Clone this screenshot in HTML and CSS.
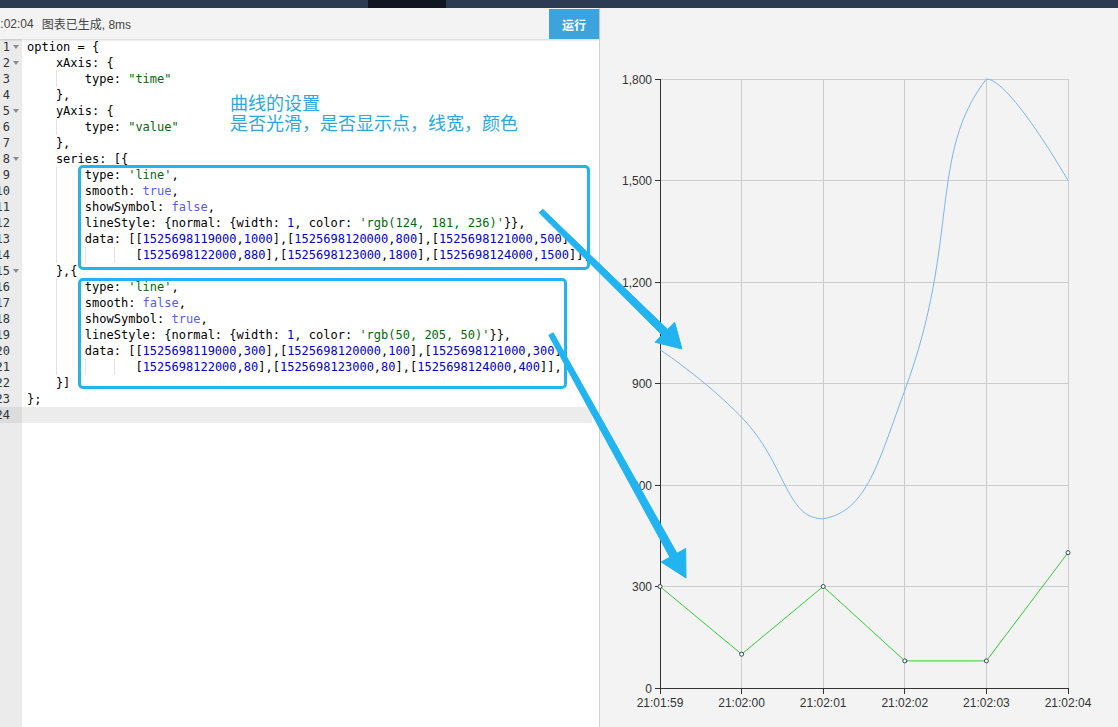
FILE: index.html
```html
<!DOCTYPE html>
<html lang="zh">
<head>
<meta charset="utf-8">
<title>ECharts 示例</title>
<link rel="stylesheet" href="styles.css">
</head>
<body>
<div class="topbar"><div class="topbar-tab"></div></div>
<div class="main">
  <section class="left">
    <div class="toolbar">
      <span class="time">21:02:04</span><span class="msg">图表已生成, 8ms</span>
      <button class="run">运行</button>
    </div>
    <div class="editor">
      <div class="gutter">
        <div class="gl"><span class="num">1</span><span class="fold open"></span></div>
        <div class="gl"><span class="num">2</span><span class="fold open"></span></div>
        <div class="gl"><span class="num">3</span><span class="fold"></span></div>
        <div class="gl"><span class="num">4</span><span class="fold"></span></div>
        <div class="gl"><span class="num">5</span><span class="fold open"></span></div>
        <div class="gl"><span class="num">6</span><span class="fold"></span></div>
        <div class="gl"><span class="num">7</span><span class="fold"></span></div>
        <div class="gl"><span class="num">8</span><span class="fold open"></span></div>
        <div class="gl"><span class="num">9</span><span class="fold"></span></div>
        <div class="gl"><span class="num">10</span><span class="fold"></span></div>
        <div class="gl"><span class="num">11</span><span class="fold"></span></div>
        <div class="gl"><span class="num">12</span><span class="fold"></span></div>
        <div class="gl"><span class="num">13</span><span class="fold"></span></div>
        <div class="gl"><span class="num">14</span><span class="fold"></span></div>
        <div class="gl"><span class="num">15</span><span class="fold open"></span></div>
        <div class="gl"><span class="num">16</span><span class="fold"></span></div>
        <div class="gl"><span class="num">17</span><span class="fold"></span></div>
        <div class="gl"><span class="num">18</span><span class="fold"></span></div>
        <div class="gl"><span class="num">19</span><span class="fold"></span></div>
        <div class="gl"><span class="num">20</span><span class="fold"></span></div>
        <div class="gl"><span class="num">21</span><span class="fold"></span></div>
        <div class="gl"><span class="num">22</span><span class="fold"></span></div>
        <div class="gl"><span class="num">23</span><span class="fold"></span></div>
        <div class="gl active"><span class="num">24</span><span class="fold"></span></div>
      </div>
      <div class="code">
<div class="ln">option = {</div>
<div class="ln">    xAxis: {</div>
<div class="ln">    <span class="ig">    </span>type: <span class="s">"time"</span></div>
<div class="ln">    },</div>
<div class="ln">    yAxis: {</div>
<div class="ln">    <span class="ig">    </span>type: <span class="s">"value"</span></div>
<div class="ln">    },</div>
<div class="ln">    series: [{</div>
<div class="ln">    <span class="ig">    </span>type: <span class="s">'line'</span>,</div>
<div class="ln">    <span class="ig">    </span>smooth: <span class="b">true</span>,</div>
<div class="ln">    <span class="ig">    </span>showSymbol: <span class="b">false</span>,</div>
<div class="ln">    <span class="ig">    </span>lineStyle: {normal: {width: <span class="n">1</span>, color: <span class="s">'rgb(124, 181, 236)'</span>}},</div>
<div class="ln">    <span class="ig">    </span>data: [[<span class="n">1525698119000</span>,<span class="n">1000</span>],[<span class="n">1525698120000</span>,<span class="n">800</span>],[<span class="n">1525698121000</span>,<span class="n">500</span>],</div>
<div class="ln">    <span class="ig">    </span><span class="ig">    </span><span class="ig">   </span>[<span class="n">1525698122000</span>,<span class="n">880</span>],[<span class="n">1525698123000</span>,<span class="n">1800</span>],[<span class="n">1525698124000</span>,<span class="n">1500</span>]],</div>
<div class="ln">    },{</div>
<div class="ln">    <span class="ig">    </span>type: <span class="s">'line'</span>,</div>
<div class="ln">    <span class="ig">    </span>smooth: <span class="b">false</span>,</div>
<div class="ln">    <span class="ig">    </span>showSymbol: <span class="b">true</span>,</div>
<div class="ln">    <span class="ig">    </span>lineStyle: {normal: {width: <span class="n">1</span>, color: <span class="s">'rgb(50, 205, 50)'</span>}},</div>
<div class="ln">    <span class="ig">    </span>data: [[<span class="n">1525698119000</span>,<span class="n">300</span>],[<span class="n">1525698120000</span>,<span class="n">100</span>],[<span class="n">1525698121000</span>,<span class="n">300</span>],</div>
<div class="ln">    <span class="ig">    </span><span class="ig">    </span><span class="ig">   </span>[<span class="n">1525698122000</span>,<span class="n">80</span>],[<span class="n">1525698123000</span>,<span class="n">80</span>],[<span class="n">1525698124000</span>,<span class="n">400</span>]],</div>
<div class="ln">    }]</div>
<div class="ln">};</div>
<div class="ln active"> </div>
        <div class="box box1"></div>
        <div class="box box2"></div>
        <div class="note"><div class="note-line">曲线的设置</div><div class="note-line">是否光滑，是否显示点，线宽，颜色</div></div>
      </div>
    </div>
  </section>
  <section class="right">
    <svg class="chart" width="518" height="719" viewBox="600 8 518 719" xmlns="http://www.w3.org/2000/svg">
      <g stroke="#cccccc" stroke-width="1" fill="none">
        <path d="M660 79.5H1068M660 180.5H1068M660 282.5H1068M660 383.5H1068M660 485.5H1068M660 586.5H1068"/>
        <path d="M741.5 79V688M823.5 79V688M904.5 79V688M986.5 79V688M1068.5 79V688"/>
      </g>
      <g stroke="#333333" stroke-width="1" fill="none">
        <path d="M660.5 79V689M655 79.5H660M655 180.5H660M655 282.5H660M655 383.5H660M655 485.5H660M655 586.5H660M655 688.5H660"/>
        <path d="M660 688.5H1069M660.5 688V694M741.5 688V694M823.5 688V694M904.5 688V694M986.5 688V694M1068.5 688V694"/>
      </g>
      <g class="ylab" text-anchor="end">
        <text x="652" y="83.5">1,800</text>
        <text x="652" y="185">1,500</text>
        <text x="652" y="286.5">1,200</text>
        <text x="652" y="388">900</text>
        <text x="652" y="489.5">600</text>
        <text x="652" y="591">300</text>
        <text x="652" y="692.5">0</text>
      </g>
      <g class="xlab" text-anchor="middle">
        <text x="660" y="707">21:01:59</text>
        <text x="741.6" y="707">21:02:00</text>
        <text x="823.2" y="707">21:02:01</text>
        <text x="904.8" y="707">21:02:02</text>
        <text x="986.4" y="707">21:02:03</text>
        <text x="1068" y="707">21:02:04</text>
      </g>
      <path fill="none" stroke="rgb(124,181,236)" stroke-width="1" d="M660 349.7C660 349.7 705 379.4 741.6 417.3C786.6 463.9 785.6 518.8 823.2 518.8C867.2 511.5 878.6 460.9 904.8 390.3C960.2 241 928.3 153.7 986.4 79C1009.9 79 1068 180.5 1068 180.5"/>
      <polyline fill="none" stroke="rgb(50,205,50)" stroke-width="1" points="660,586.5 741.6,654.2 823.2,586.5 904.8,660.9 986.4,660.9 1068,552.7"/>
      <g fill="#ffffff" stroke="#2f4554" stroke-width="1">
        <circle cx="660" cy="586.5" r="2"/>
        <circle cx="741.6" cy="654.2" r="2"/>
        <circle cx="823.2" cy="586.5" r="2"/>
        <circle cx="904.8" cy="660.9" r="2"/>
        <circle cx="986.4" cy="660.9" r="2"/>
        <circle cx="1068" cy="552.7" r="2"/>
      </g>
    </svg>
  </section>
</div>
<svg class="arrows" width="1118" height="727" viewBox="0 0 1118 727" xmlns="http://www.w3.org/2000/svg">
  <g fill="#22b4f0" stroke="#22b4f0" stroke-width="1" stroke-linejoin="round">
    <polygon points="542.75,209.21 667.65,329.35 674.64,322.2 682,349 655.06,342.22 662.05,335.07 539.25,212.79"/>
    <polygon points="553.19,332.79 676.91,553.31 685.66,548.47 686,578 661.16,562.03 669.91,557.19 548.81,335.21"/>
  </g>
</svg>
</body>
</html>
```
FILE: styles.css
```css
* { box-sizing: border-box; }
html, body { margin: 0; padding: 0; }
body {
  width: 1118px;
  height: 727px;
  overflow: hidden;
  position: relative;
  background: #f3f3f3;
  font-family: "Liberation Sans", Arial, "Noto Sans CJK SC", sans-serif;
}
.topbar { height: 8px; background: #2c3a53; display: flex; }
.topbar-tab { margin-left: 368px; width: 78px; background: #0f1521; }
.main { display: flex; height: 719px; }
.left {
  width: 600px;
  flex: none;
  display: flex;
  flex-direction: column;
  background: #ffffff;
  border-right: 1px solid #d2d2d2;
}
.toolbar {
  height: 31px;
  flex: none;
  display: flex;
  align-items: center;
  background: #f3f3f3;
  box-shadow: 0 1px 2px rgba(0, 0, 0, 0.18);
  position: relative;
  z-index: 1;
  font-size: 12px;
  color: #444;
}
.time { margin-left: -13px; }
.msg { margin-left: 8px; font-family: "Liberation Sans", "Noto Sans CJK SC", sans-serif; }
.run {
  margin-left: auto;
  align-self: stretch;
  margin-top: 1px;
  width: 50px;
  border: 0;
  padding: 0;
  background: #3ba3dd;
  color: #fff;
  font-size: 12px;
  font-weight: bold;
  font-family: "Noto Sans CJK SC", sans-serif;
}
.editor { flex: 1; display: flex; min-height: 0; }
.gutter {
  width: 22px;
  flex: none;
  background: #ebebeb;
  font: 12px/16px "DejaVu Sans Mono", monospace;
  color: #333;
}
.gl { height: 16px; display: flex; }
.gl.active { background: #dcdcdc; }
.num { width: 10px; flex: none; display: flex; justify-content: flex-end; white-space: nowrap; }
.fold { width: 12px; flex: none; display: flex; align-items: center; justify-content: center; }
.fold.open::after {
  content: "";
  border-left: 3px solid transparent;
  border-right: 3px solid transparent;
  border-top: 4px solid #8a8a8a;
}
.code {
  flex: 1;
  position: relative;
  padding-right: 7px;
  font: 12px/16px "DejaVu Sans Mono", monospace;
  color: #000;
}
.ln { height: 16px; white-space: pre; padding-left: 5px; }
.ln.active { background: #ececec; }
.ig {
  display: inline-block;
  height: 16px;
  vertical-align: top;
  background: linear-gradient(#e2e2e2, #e2e2e2) left top / 1px 100% no-repeat;
}
.s { color: #036a07; }
.n { color: #0000cd; }
.b { color: #585cf6; }
.box {
  position: absolute;
  border: 3px solid #22b4f0;
  border-radius: 5px;
}
.box1 { left: 56px; top: 126px; width: 512px; height: 105px; }
.box2 { left: 56px; top: 239px; width: 489px; height: 111px; }
.note {
  position: absolute;
  left: 208px;
  top: 53px;
  font: 18px/20px "Noto Sans CJK SC", sans-serif;
  color: #2aa9e4;
  white-space: nowrap;
}
.note-line { height: 20px; }
.right { flex: 1; background: #f3f3f3; }
.chart { display: block; }
.ylab, .xlab {
  font-family: "Liberation Sans", Arial, sans-serif;
  font-size: 12px;
  fill: #333;
}
.arrows { position: absolute; left: 0; top: 0; pointer-events: none; }
```
